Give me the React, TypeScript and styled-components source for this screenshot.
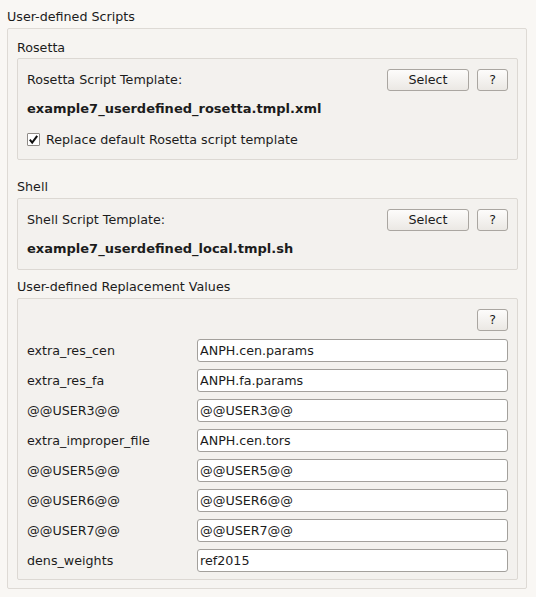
import React from "react";
import styled, { createGlobalStyle } from "styled-components";

const Global = createGlobalStyle`
  html, body { margin: 0; padding: 0; background: #f9f7f4; }
  body { font-family: "DejaVu Sans", "Liberation Sans", sans-serif; font-size: 12.7px; color: #1c1c1c; }
`;

const Page = styled.div`
  width: 536px;
  height: 597px;
  box-sizing: border-box;
  padding: 9px 9px 0 7px;
  display: flex;
  flex-direction: column;
`;

const GroupTitle = styled.div<{ $top?: number; $bottom?: number }>`
  height: 16px;
  line-height: 16px;
  margin-top: ${(p) => p.$top ?? 0}px;
  margin-bottom: ${(p) => p.$bottom ?? 3}px;
  white-space: nowrap;
`;

const OuterBox = styled.div`
  border: 1px solid #dedad5;
  border-radius: 2px;
  background: #f6f4f1;
  padding: 11px 8px 8px 9px;
  display: flex;
  flex-direction: column;
`;

const InnerBox = styled.div<{ $pad?: string }>`
  border: 1px solid #dcd8d3;
  border-radius: 2px;
  background: #f3f1ee;
  padding: ${(p) => p.$pad ?? "10px 9px 12px 9px"};
  display: flex;
  flex-direction: column;
`;

const HeaderRow = styled.div`
  display: flex;
  align-items: center;
  height: 22px;
`;

const Label = styled.div`
  flex: 1;
  line-height: 16px;
  white-space: nowrap;
`;

const Button = styled.button<{ $w: number }>`
  width: ${(p) => p.$w}px;
  height: 22px;
  margin-left: 8px;
  padding: 0;
  box-sizing: border-box;
  border: 1px solid #aaa6a1;
  border-radius: 3px;
  background: linear-gradient(#fdfcfb, #ebe8e4);
  font-family: "DejaVu Sans", "Liberation Sans", sans-serif;
  font-size: 12.7px;
  color: #1c1c1c;
  line-height: 20px;
`;

const FileName = styled.div<{ $top: number }>`
  margin-top: ${(p) => p.$top}px;
  line-height: 16px;
  font-size: 13px;
  font-weight: bold;
  white-space: nowrap;
`;

const CheckRow = styled.label`
  margin-top: 14px;
  display: flex;
  align-items: center;
  height: 16px;
  gap: 6px;
`;

const CheckBox = styled.span`
  width: 13px;
  height: 13px;
  box-sizing: border-box;
  border: 1px solid #8f8b87;
  border-radius: 1px;
  background: #ffffff;
  display: flex;
  align-items: center;
  justify-content: center;
`;

const HelpRow = styled.div`
  display: flex;
  justify-content: flex-end;
  height: 22px;
  margin-bottom: 8px;
`;

const ValueGrid = styled.div`
  display: grid;
  grid-template-columns: 170px 1fr;
  row-gap: 7px;
  align-items: center;
`;

const ValueLabel = styled.div`
  line-height: 16px;
  white-space: nowrap;
`;

const Input = styled.input`
  height: 23px;
  box-sizing: border-box;
  border: 1px solid #a3a09c;
  border-radius: 3px;
  background: #ffffff;
  padding: 0 2px;
  font-family: "DejaVu Sans", "Liberation Sans", sans-serif;
  font-size: 12.7px;
  color: #1c1c1c;
  outline: none;
  width: 100%;
`;

const values: [string, string][] = [
  ["extra_res_cen", "ANPH.cen.params"],
  ["extra_res_fa", "ANPH.fa.params"],
  ["@@USER3@@", "@@USER3@@"],
  ["extra_improper_file", "ANPH.cen.tors"],
  ["@@USER5@@", "@@USER5@@"],
  ["@@USER6@@", "@@USER6@@"],
  ["@@USER7@@", "@@USER7@@"],
  ["dens_weights", "ref2015"],
];

export default function App() {
  return (
    <>
      <Global />
      <Page>
        <GroupTitle>User-defined Scripts</GroupTitle>
        <OuterBox>
          <GroupTitle $bottom={2}>Rosetta</GroupTitle>
          <InnerBox>
            <HeaderRow>
              <Label>Rosetta Script Template:</Label>
              <Button $w={82}>Select</Button>
              <Button $w={31}>?</Button>
            </HeaderRow>
            <FileName $top={10}>example7_userdefined_rosetta.tmpl.xml</FileName>
            <CheckRow>
              <CheckBox>
                <svg width="11" height="11" viewBox="0 0 11 11">
                  <path d="M1.8 5.6 L4.2 8.6 L9.2 1.8" fill="none" stroke="#111" strokeWidth="2" />
                </svg>
              </CheckBox>
              <span>Replace default Rosetta script template</span>
            </CheckRow>
          </InnerBox>
          <GroupTitle $top={19}>Shell</GroupTitle>
          <InnerBox>
            <HeaderRow>
              <Label>Shell Script Template:</Label>
              <Button $w={82}>Select</Button>
              <Button $w={31}>?</Button>
            </HeaderRow>
            <FileName $top={10}>example7_userdefined_local.tmpl.sh</FileName>
          </InnerBox>
          <GroupTitle $top={9}>User-defined Replacement Values</GroupTitle>
          <InnerBox $pad="10px 9px 7px 9px">
            <HelpRow>
              <Button $w={31}>?</Button>
            </HelpRow>
            <ValueGrid>
              {values.map(([k, v]) => (
                <React.Fragment key={k}>
                  <ValueLabel>{k}</ValueLabel>
                  <Input defaultValue={v} />
                </React.Fragment>
              ))}
            </ValueGrid>
          </InnerBox>
        </OuterBox>
      </Page>
    </>
  );
}
